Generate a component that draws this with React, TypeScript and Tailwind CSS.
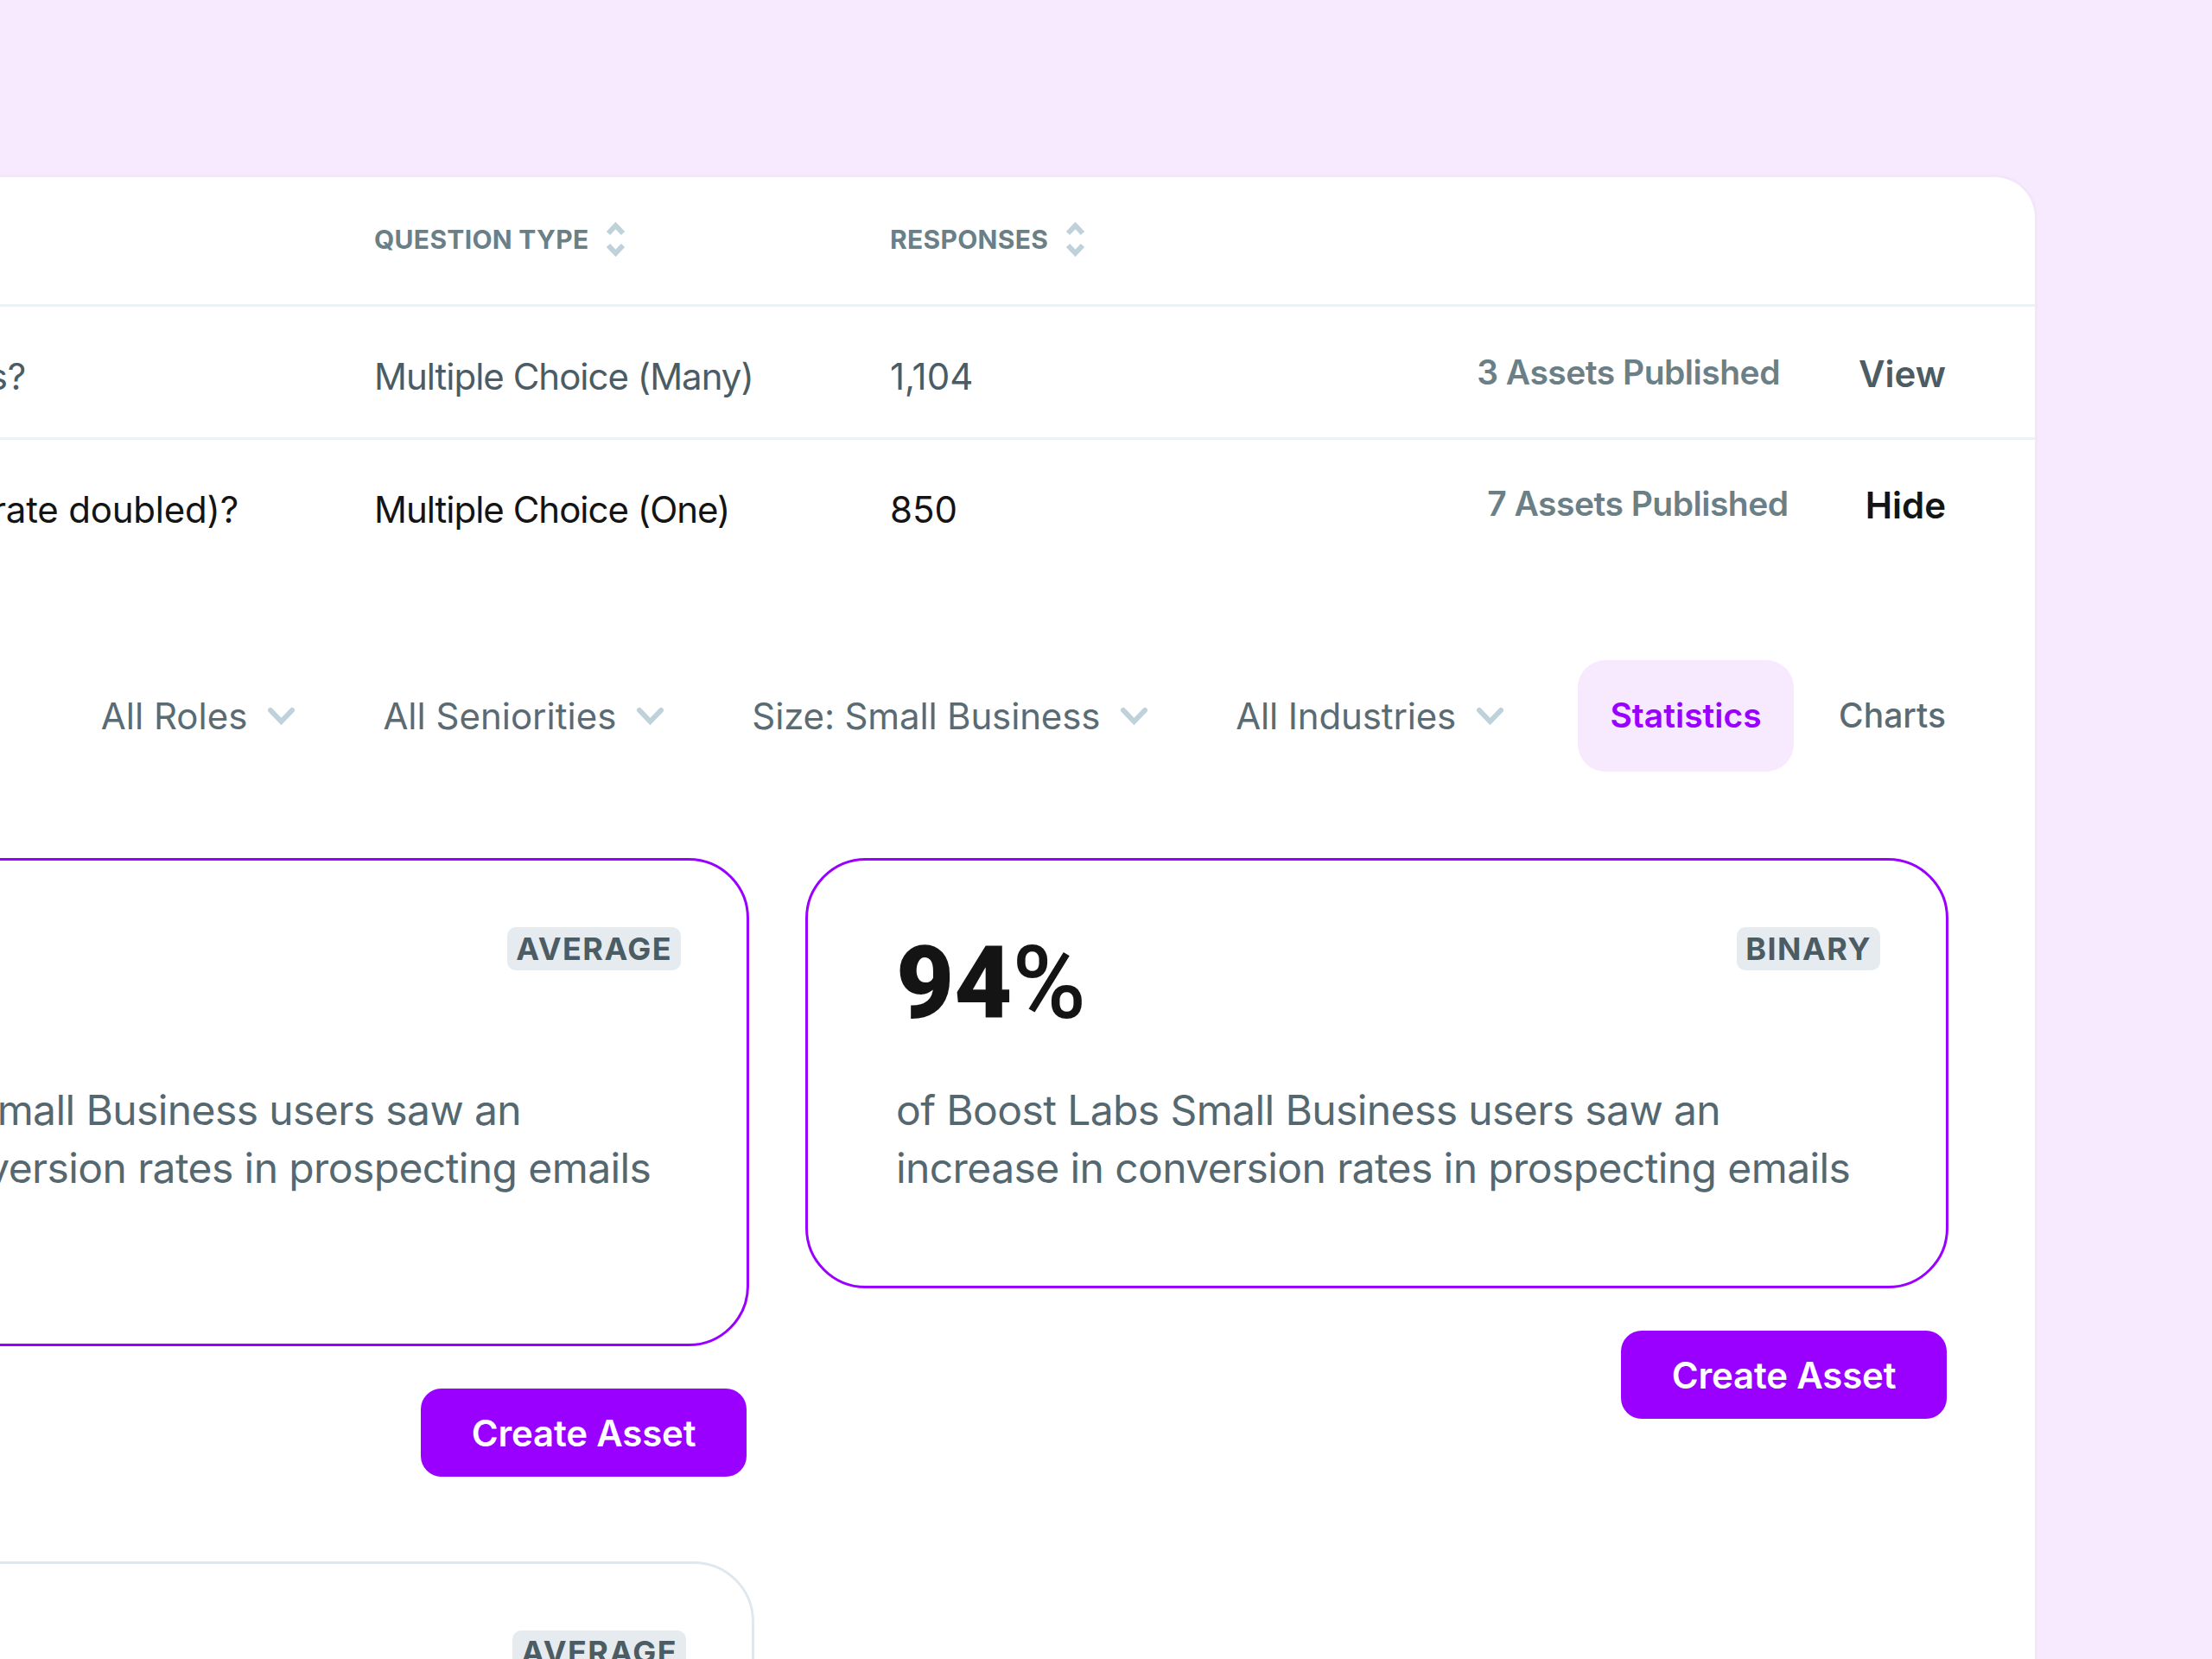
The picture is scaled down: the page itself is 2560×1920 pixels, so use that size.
import { ReactNode } from 'react'

const rows = [
  { question: 's?', tail: 'pr-[403px]', type: 'Multiple Choice (Many)', count: '1,104', assets: '3 Assets Published', action: 'View', first: true },
  { question: 'rate doubled)?', tail: 'pr-[157px]', type: 'Multiple Choice (One)', count: '850', assets: '7 Assets Published', action: 'Hide', first: false },
]

const filters = ['All Roles', 'All Seniorities', 'Size: Small Business', 'All Industries']

function SortIcon() {
  return (
    <svg width="23" height="42" viewBox="0 0 23 42" fill="none" stroke="#bfd2db" strokeWidth="6">
      <path d="M3 14 L11.5 5 L20 14" />
      <path d="M3 28 L11.5 37 L20 28" />
    </svg>
  )
}

function Chevron() {
  return (
    <svg width="33" height="22" viewBox="0 0 33 22" fill="none" stroke="#bfd2db" strokeWidth="6" strokeLinecap="round">
      <path d="M4 4 L16.5 17 L29 4" />
    </svg>
  )
}

function Badge({ children }: { children: ReactNode }) {
  return (
    <span className="flex h-[50px] items-center rounded-[10px] bg-[#e5ebee] px-[10px] text-[36px] font-bold tracking-[0.04em] text-[#4b5c64]">
      {children}
    </span>
  )
}

function CreateButton() {
  return (
    <button className="flex h-[102px] w-[377px] items-center justify-center rounded-[24px] bg-[#9900ff] text-[42px] font-semibold tracking-[-0.2px] text-white">
      Create Asset
    </button>
  )
}

function StatCard({ stat, kind, height }: { stat: string; kind: string; height: string }) {
  return (
    <div className={`${height} w-[1323px] rounded-[70px] border-[3px] border-[#9900ff] pt-[77px] pr-[76px] pl-[102px]`}>
      <div className="flex items-start justify-between">
        <div className="mt-[4px] font-[Roboto,sans-serif] text-[116px] leading-[122px] font-black text-[#141414]">
          {stat}
          <span className="font-medium">%</span>
        </div>
        <Badge>{kind}</Badge>
      </div>
      <p className="mt-[52px] text-[48px] leading-[67px] tracking-[-0.6px] whitespace-nowrap text-[#556870]">
        of Boost Labs Small Business users saw an
        <br />
        increase in conversion rates in prospecting emails
      </p>
    </div>
  )
}

export default function App() {
  return (
    <div className="h-[1920px] w-[2560px] overflow-hidden bg-[#f7e9fe] pt-[202px] font-[Inter,sans-serif]">
      <div className="ml-[-500px] h-[1718px] w-[2858px] rounded-tr-[50px] border-t-[3px] border-r-[3px] border-[#f1e6fa] bg-white">
        {/* table */}
        <div className="flex h-[150px] items-center border-b-[3px] border-[#ecf2f4] pb-[3px] pl-[933px] text-[30px] font-bold tracking-[0.01em] text-[#6b7f87]">
          <div className="flex w-[597px] items-center gap-[20px]">
            QUESTION TYPE
            <SortIcon />
          </div>
          <div className="flex items-center gap-[20px]">
            RESPONSES
            <SortIcon />
          </div>
        </div>
        {rows.map(row => (
          <div
            key={row.action}
            className={`flex h-[154px] items-center pr-[103px] ${row.first ? 'border-b-[3px] border-[#ecf2f4] text-[#4b5c64]' : 'pb-[4px] text-[#141414]'}`}
          >
            <div className={`flex w-[933px] justify-end pt-[10px] text-[42px] tracking-[-0.2px] ${row.tail}`}>
              {row.question}
            </div>
            <div className="w-[597px] pt-[10px] text-[42px] tracking-[-1px]">{row.type}</div>
            <div className="pt-[10px] text-[42px]">{row.count}</div>
            <div className={`ml-auto text-[39px] font-semibold tracking-[-0.5px] text-[#6b7f87] ${row.first ? 'pt-[1px]' : 'pb-[2px]'}`}>
              {row.assets}
            </div>
            <div className={`text-[42px] font-semibold ${row.first ? 'ml-[91px] pt-[3px] text-[#4b5c64]' : 'ml-[89px] text-[#141414]'}`}>
              {row.action}
            </div>
          </div>
        ))}

        {/* filters */}
        <div className="mt-[101px] flex h-[129px] items-center justify-end pr-[103px] text-[42px] text-[#5a6b73]">
          {filters.map((f, i) => (
            <div
              key={f}
              className={`flex items-center gap-[23px] ${i === filters.length - 1 ? 'mr-[85px]' : 'mr-[101px]'} ${i >= 2 ? 'tracking-[-0.15px]' : ''}`}
            >
              {f}
              <Chevron />
            </div>
          ))}
          <div className="flex h-[129px] w-[250px] items-center justify-center rounded-[32px] bg-[#f7e9fe] text-[39px] font-semibold text-[#9900ff]">
            Statistics
          </div>
          <div className="ml-[52px] text-[39px] font-medium">Charts</div>
        </div>

        {/* cards */}
        <div className="mt-[100px] flex gap-[65px] pl-[42px]">
          <div className="flex w-[1325px] flex-col items-end">
            <StatCard stat="32" kind="AVERAGE" height="h-[565px]" />
            <div className="mt-[49px] mr-[3px]">
              <CreateButton />
            </div>
            <div className="mt-[98px] mr-[-6px] h-[400px] w-[1325px] rounded-t-[70px] border-[3px] border-[#dfe8ee] pt-[77px] pr-[76px]">
              <div className="flex justify-end">
                <Badge>AVERAGE</Badge>
              </div>
            </div>
          </div>
          <div className="flex flex-col items-end">
            <StatCard stat="94" kind="BINARY" height="h-[498px]" />
            <div className="mt-[49px] mr-[2px]">
              <CreateButton />
            </div>
          </div>
        </div>
      </div>
    </div>
  )
}
